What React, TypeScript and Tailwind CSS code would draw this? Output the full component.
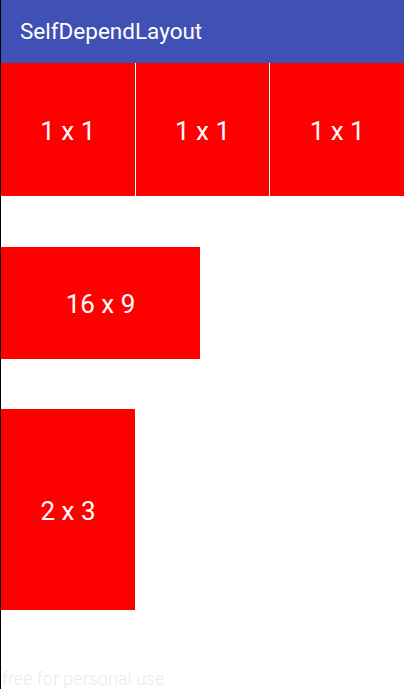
export default function App() {
  return (
    <div
      className="relative flex h-screen flex-col overflow-hidden border-l border-black bg-white"
      style={{ fontFamily: "Roboto, 'Noto Sans', sans-serif" }}
    >
      {/* Toolbar */}
      <header className="flex h-[63px] shrink-0 items-center bg-[#3f51b5] pl-[19px]">
        <h1 className="text-[22.5px] text-white">SelfDependLayout</h1>
      </header>

      {/* 1 x 1 row */}
      <div className="flex h-[133px] gap-px">
        <div className="flex flex-1 items-center justify-center bg-[#ff0000] pt-[3px] text-[26px] text-white">1 x 1</div>
        <div className="flex flex-1 items-center justify-center bg-[#ff0000] pt-[3px] text-[26px] text-white">1 x 1</div>
        <div className="flex flex-1 items-center justify-center bg-[#ff0000] pt-[3px] text-[26px] text-white">1 x 1</div>
      </div>

      {/* 16 x 9 */}
      <div className="mt-[51px] flex h-[112px] w-[199px] items-center justify-center bg-[#ff0000] pt-[3px] text-[26px] text-white">
        16 x 9
      </div>

      {/* 2 x 3 */}
      <div className="mt-[50px] flex h-[201px] w-[134px] items-center justify-center bg-[#ff0000] pt-[3px] text-[26px] text-white">
        2 x 3
      </div>

      <p className="absolute bottom-0 left-[1px] text-[18px] font-light leading-[20px] text-[#ececec]">
        free for personal use
      </p>
    </div>
  );
}
